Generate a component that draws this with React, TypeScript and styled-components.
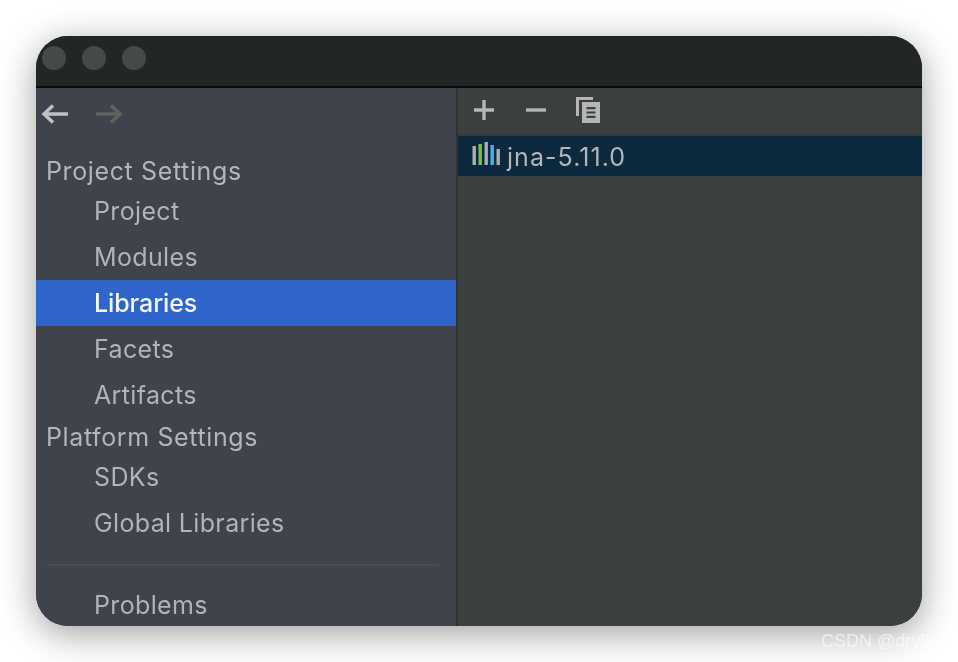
import styled, { createGlobalStyle } from "styled-components";

const GlobalStyle = createGlobalStyle`
  html, body {
    margin: 0;
    padding: 0;
    background: #fff;
    overflow: hidden;
  }
`;

const Page = styled.div`
  position: relative;
  width: 958px;
  height: 662px;
  padding: 36px;
  box-sizing: border-box;
  font-family: "Inter", "Liberation Sans", sans-serif;
`;

const Window = styled.div`
  width: 886px;
  height: 590px;
  border-radius: 32px;
  overflow: hidden;
  display: flex;
  flex-direction: column;
  background: #3c3f40;
  box-shadow: 0 8px 36px rgba(0, 0, 0, 0.38);
`;

const TitleBar = styled.div`
  flex: none;
  height: 44px;
  padding: 0 0 6px 6px;
  display: flex;
  align-items: center;
  gap: 16px;
  background: #222626;
  border-bottom: 2px solid #0a0a0a;
`;

const Light = styled.span`
  width: 24px;
  height: 24px;
  border-radius: 50%;
  background: #454947;
`;

const Body = styled.div`
  flex: 1;
  min-height: 0;
  display: flex;
`;

const Sidebar = styled.aside`
  flex: none;
  width: 420px;
  display: flex;
  flex-direction: column;
  background: #3f434c;
  overflow: hidden;
`;

const NavRow = styled.div`
  flex: none;
  height: 64px;
  padding: 0 0 12px 5px;
  box-sizing: border-box;
  display: flex;
  align-items: center;
  gap: 26px;
`;

const SectionTitle = styled.div`
  flex: none;
  height: 36px;
  padding: 2px 0 0 10px;
  box-sizing: border-box;
  display: flex;
  align-items: center;
  font-size: 25px;
  letter-spacing: 0.62px;
  color: #b3b5b7;
  filter: blur(0.4px);
`;

const Item = styled.div<{ $selected?: boolean }>`
  flex: none;
  height: 46px;
  padding-left: 58px;
  display: flex;
  align-items: center;
  font-size: 25px;
  letter-spacing: ${(p) => (p.$selected ? "-0.1px" : "0.35px")};
  font-weight: ${(p) => (p.$selected ? 500 : 400)};
  color: ${(p) => (p.$selected ? "#f4f6fa" : "#b1b3b5")};
  background: ${(p) => (p.$selected ? "#2f65ca" : "transparent")};
  & > span {
    filter: blur(0.4px);
  }
`;

const Separator = styled.hr`
  flex: none;
  height: 2px;
  margin: 18px 18px 16px 10px;
  border: 0;
  background: #494c52;
`;

const Divider = styled.div`
  flex: none;
  width: 2px;
  background: #2f3236;
`;

const Main = styled.main`
  flex: 1;
  min-width: 0;
  display: flex;
  flex-direction: column;
  background: #3c3f40;
`;

const Toolbar = styled.div`
  flex: none;
  height: 44px;
  padding: 0 0 2px 14px;
  display: flex;
  align-items: center;
  gap: 28px;
  border-bottom: 2px solid #363839;
`;

const ToolIcon = styled.svg`
  width: 24px;
  height: 28px;
  flex: none;
  color: #b4b6b8;
  filter: blur(0.3px);
`;

const LibraryRow = styled.div`
  flex: none;
  height: 40px;
  padding: 2px 0 0 14px;
  box-sizing: border-box;
  display: flex;
  align-items: center;
  gap: 7px;
  background: #0d293e;
  font-size: 25px;
  letter-spacing: 1.05px;
  color: #b1b6b9;
  & > span {
    filter: blur(0.4px);
  }
`;

const LibraryGlyph = styled.svg`
  flex: none;
  margin-top: -8px;
  filter: blur(0.3px);
`;

const Watermark = styled.div`
  position: absolute;
  left: 821px;
  top: 631px;
  font-family: "Liberation Sans", sans-serif;
  font-size: 18px;
  line-height: 20px;
  color: rgba(255, 255, 255, 0.6);
`;

function ArrowLeft({ color }: { color: string }) {
  return (
    <svg width="28" height="24" viewBox="0 0 28 24" fill="none" stroke={color} strokeWidth="3.4">
      <path d="M27 12H3M12 3.5 3 12l9 8.5" />
    </svg>
  );
}

function ArrowRight({ color }: { color: string }) {
  return (
    <svg width="28" height="24" viewBox="0 0 28 24" fill="none" stroke={color} strokeWidth="3.4">
      <path d="M1 12h24M16 3.5l9 8.5-9 8.5" />
    </svg>
  );
}

function LibraryIcon() {
  return (
    <LibraryGlyph width="28" height="23" viewBox="0 0 28 23">
      <rect x="0.5" y="4" width="3.4" height="19" fill="#a9afb3" />
      <rect x="6.5" y="2" width="3.4" height="21" fill="#7ec03f" />
      <rect x="12.5" y="0" width="3.4" height="23" fill="#a9afb3" />
      <rect x="18.5" y="3" width="3.4" height="20" fill="#3fb5e8" />
      <rect x="24.5" y="7" width="3.4" height="16" fill="#a9afb3" />
    </LibraryGlyph>
  );
}

export default function App() {
  return (
    <Page>
      <GlobalStyle />
      <Window>
        <TitleBar>
          <Light />
          <Light />
          <Light />
        </TitleBar>
        <Body>
          <Sidebar>
            <NavRow>
              <ArrowLeft color="#c0c2c4" />
              <ArrowRight color="#5f625f" />
            </NavRow>
            <SectionTitle>Project Settings</SectionTitle>
            <Item><span>Project</span></Item>
            <Item><span>Modules</span></Item>
            <Item $selected><span>Libraries</span></Item>
            <Item><span>Facets</span></Item>
            <Item><span>Artifacts</span></Item>
            <SectionTitle>Platform Settings</SectionTitle>
            <Item><span>SDKs</span></Item>
            <Item><span>Global Libraries</span></Item>
            <Separator />
            <Item><span>Problems</span></Item>
          </Sidebar>
          <Divider />
          <Main>
            <Toolbar>
              <ToolIcon viewBox="0 0 24 28" fill="currentColor">
                <path d="M10.3 4h3.4v8.3H22v3.4h-8.3V24h-3.4v-8.3H2v-3.4h8.3z" />
              </ToolIcon>
              <ToolIcon viewBox="0 0 24 28" fill="currentColor">
                <rect x="2" y="12.3" width="20" height="3.4" />
              </ToolIcon>
              <ToolIcon viewBox="0 0 24 28" fill="currentColor">
                <path d="M0 1h17v3H3v16H0z" />
                <path fillRule="evenodd" d="M6 6h18v21H6zm4.5 5v2.2h9V11zm0 4.4v2.2h9v-2.2zm0 4.4V22h9v-2.2z" />
              </ToolIcon>
            </Toolbar>
            <LibraryRow>
              <LibraryIcon />
              <span>jna-5.11.0</span>
            </LibraryRow>
          </Main>
        </Body>
      </Window>
      <Watermark>CSDN @dry8</Watermark>
    </Page>
  );
}
